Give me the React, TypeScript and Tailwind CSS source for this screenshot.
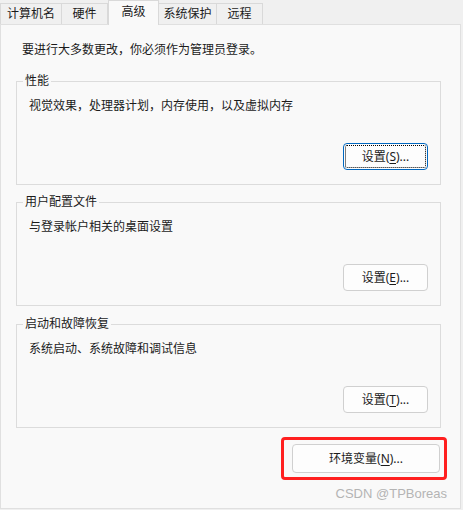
import React from 'react';

const tabs = [
  { label: '计算机名', w: 'w-[62px]' },
  { label: '硬件', w: 'w-[46px]' },
  { label: '高级', w: 'w-[51px]', active: true },
  { label: '系统保护', w: 'w-[58px]' },
  { label: '远程', w: 'w-[46px]' },
];

function Mnemonic({ text, k }: { text: string; k: string }) {
  return (
    <span>
      {text}(<span className="underline underline-offset-2">{k}</span>)...
    </span>
  );
}

function SettingsButton({ k, focused }: { k: string; focused?: boolean }) {
  return (
    <button
      className={`w-[85px] h-[27px] rounded-[4px] border bg-[#fdfdfd] text-[12px] text-[#1b1b1b] ${
        focused
          ? 'border-[#0067c0] outline-1 outline-dotted outline-black -outline-offset-3'
          : 'border-[#d0d0d0]'
      }`}
    >
      <Mnemonic text="设置" k={k} />
    </button>
  );
}

function Group({ title, desc, k, focused }: { title: string; desc: string; k: string; focused?: boolean }) {
  return (
    <div className="relative ml-[15px] w-[425px] h-[104px] border border-[#dcdcdc] flex flex-col pt-[16px] px-[12px] pb-[14px]">
      {/* group box caption sits over the top border */}
      <span className="absolute -top-[9px] left-[6px] px-[2px] bg-[#f9f9f9] leading-[16px]">{title}</span>
      <div className="leading-[16px]">{desc}</div>
      <div className="mt-auto flex justify-end">
        <SettingsButton k={k} focused={focused} />
      </div>
    </div>
  );
}

export default function App() {
  return (
    <div className="w-[463px] h-[510px] bg-[#f0f0f0] overflow-hidden text-[12px] text-[#1b1b1b] font-['Noto_Sans','Noto_Sans_CJK_SC',sans-serif]">
      <div className="flex items-end h-[24px]">
        {tabs.map((t) =>
          t.active ? (
            <div
              key={t.label}
              className={`${t.w} relative z-10 h-[25px] -mb-px flex items-center justify-center pb-[3px] border border-b-0 border-[#d9d9d9] bg-[#f9f9f9]`}
            >
              {t.label}
            </div>
          ) : (
            <div
              key={t.label}
              className={`${t.w} h-[21px] flex items-center justify-center border-t border-r first:border-l border-[#d9d9d9] bg-[#f0f0f0]`}
            >
              {t.label}
            </div>
          )
        )}
      </div>

      <div className="w-[461px] h-[485px] bg-[#f9f9f9] border border-[#e0e0e0] flex flex-col">
        <div className="pl-[21px] pt-[17px] leading-[16px]">要进行大多数更改，你必须作为管理员登录。</div>

        <div className="mt-[23px]">
          <Group title="性能" desc="视觉效果，处理器计划，内存使用，以及虚拟内存" k="S" focused />
        </div>
        <div className="mt-[17px]">
          <Group title="用户配置文件" desc="与登录帐户相关的桌面设置" k="E" />
        </div>
        <div className="mt-[18px]">
          <Group title="启动和故障恢复" desc="系统启动、系统故障和调试信息" k="T" />
        </div>

        <div className="mt-[9px] flex justify-end pr-[13px]">
          <div className="border-[3px] border-[#ff1f1f] rounded-[4px] pl-[8px] pr-[4px] py-[4px]">
            <button className="w-[148px] h-[29px] rounded-[4px] border border-[#d0d0d0] bg-[#fdfdfd] text-[12px]">
              <Mnemonic text="环境变量" k="N" />
            </button>
          </div>
        </div>

        <div className="mt-[6px] flex justify-end pr-[13px] text-[13px] leading-[15px] text-[#b4b4b4] font-['Liberation_Sans',sans-serif]">
          CSDN @TPBoreas
        </div>
      </div>
    </div>
  );
}
